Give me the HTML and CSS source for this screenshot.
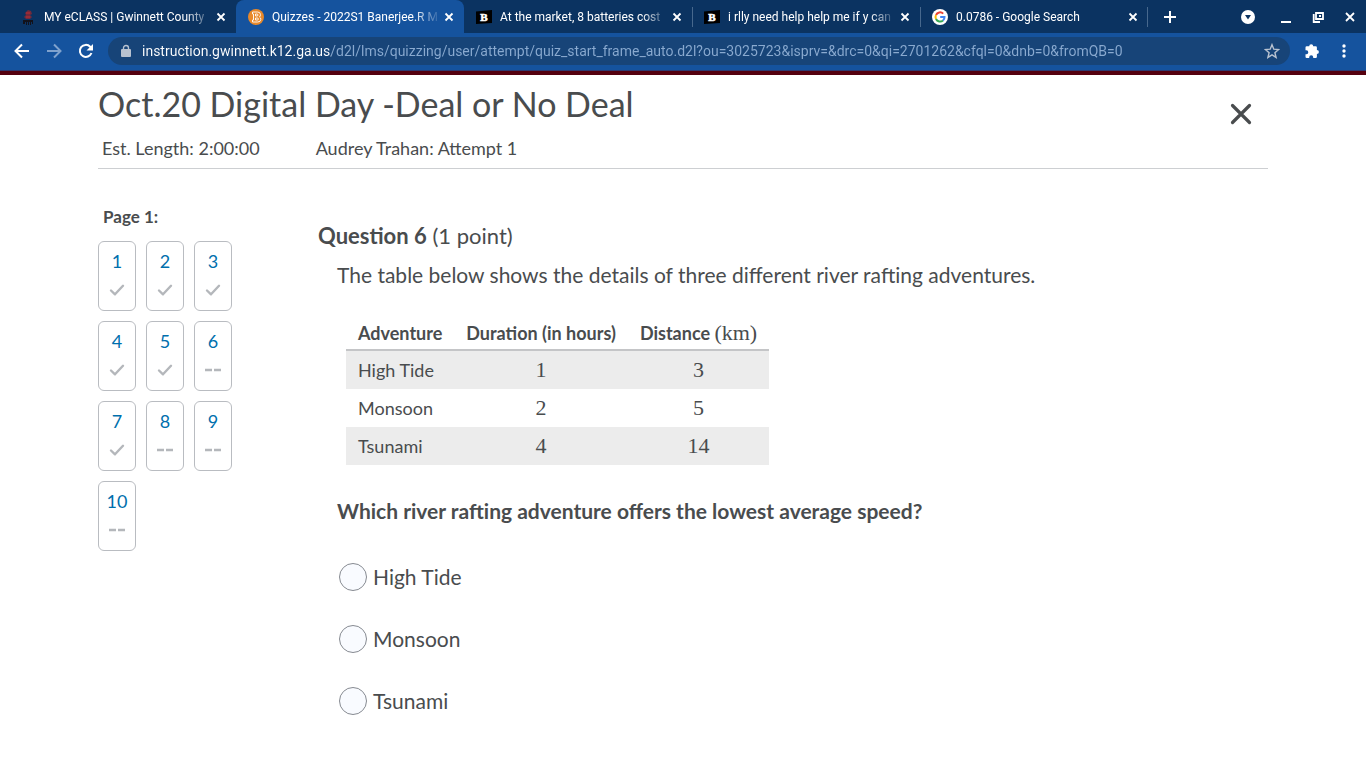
FILE: index.html
```html
<!DOCTYPE html>
<html lang="en">
<head>
  <meta charset="UTF-8" />
  <meta name="viewport" content="width=device-width, initial-scale=1.0"/>
  <title>Quizzes - 2022S1 Banerjee.R</title>
  <link rel="stylesheet" href="styles.css">
</head>
<body>
  <svg class="defs" aria-hidden="true">
    <symbol id="x" viewBox="0 0 10 10"><path d="M1.5 1.5l7 7M8.5 1.5l-7 7" fill="none" stroke="currentColor" stroke-width="1.8"/></symbol>
    <symbol id="check" viewBox="0 0 16 12"><path d="M2 6.500l4 3.800 8-8.500" fill="none" stroke="currentColor" stroke-width="2.4" stroke-linecap="round" stroke-linejoin="round"/></symbol>
    <symbol id="dashes" viewBox="0 0 16 12"><path d="M0 6h7M9 6h7" fill="none" stroke="currentColor" stroke-width="2.6"/></symbol>
    <symbol id="brainly" viewBox="0 0 16 16"><path d="M0 2.5L16 1v13L0 15z" fill="#000"/><text x="8" y="11.8" text-anchor="middle" font-family="Liberation Serif, serif" font-weight="bold" font-size="11" fill="#fff" stroke="#fff" stroke-width=".6">B</text></symbol>
  </svg>

  <header class="browser">
    <div class="tabstrip">
      <div class="tab">
        <svg class="favicon" viewBox="0 0 16 16"><path d="M5 4l3-3 3 1 1 3-2 1 2 2-2 2H6L4 8l2-2z" fill="#722a3b"/><path d="M6 4h4M6 8h4" stroke="#c02c35"/><path d="M3 15v-4h10v4h-1v-2h-1v3h-1v-3H9v3H8v-3H7v3H6v-3H5v2z" fill="#12121b"/></svg>
        <span class="tab-title">MY eCLASS | Gwinnett County</span>
        <button class="icon-btn" aria-label="Close tab"><svg class="close"><use href="#x"/></svg></button>
      </div>
      <div class="tab active">
        <svg class="favicon" viewBox="0 0 16 16"><circle cx="8" cy="8" r="8" fill="#e8892b"/><path d="M4.5 3h5q3 0 3 2.700-.1 1.500-1 2.300 1.500.8 1.300 2.500-.2 2.500-3.200 2.500H4.500v-2h1V5h-1zM7.500 5v2H9q1 0 1-1T9 5zm0 4v2H9.400q1 0 1-1t-1-1z" fill="none" stroke="#fff" stroke-width=".9"/></svg>
        <span class="tab-title">Quizzes - 2022S1 Banerjee.R M</span>
        <button class="icon-btn" aria-label="Close tab"><svg class="close"><use href="#x"/></svg></button>
      </div>
      <div class="tab">
        <svg class="favicon"><use href="#brainly"/></svg>
        <span class="tab-title">At the market, 8 batteries cost</span>
        <button class="icon-btn" aria-label="Close tab"><svg class="close"><use href="#x"/></svg></button>
      </div>
      <div class="tab divided">
        <svg class="favicon"><use href="#brainly"/></svg>
        <span class="tab-title">i rlly need help help me if y can</span>
        <button class="icon-btn" aria-label="Close tab"><svg class="close"><use href="#x"/></svg></button>
      </div>
      <div class="tab divided last">
        <svg class="favicon" viewBox="0 0 16 16"><circle cx="8" cy="8" r="8" fill="#fff"/><g fill="none" stroke-width="2"><path d="M11.200 4.600A4.500 4.500 0 0 0 4 6" stroke="#ea4335"/><path d="M4 6a4.500 4.500 0 0 0 0 4" stroke="#fbbc05"/><path d="M4 10a4.500 4.500 0 0 0 7 1.500" stroke="#34a853"/><path d="M11 11.500A4.500 4.500 0 0 0 12.500 8H8.200" stroke="#4285f4"/></g></svg>
        <span class="tab-title">0.0786 - Google Search</span>
        <button class="icon-btn" aria-label="Close tab"><svg class="close"><use href="#x"/></svg></button>
      </div>
      <button class="icon-btn new-tab" aria-label="New tab"><svg viewBox="0 0 12 12"><path d="M6 0v12M0 6h12" stroke="currentColor" stroke-width="2"/></svg></button>
      <div class="window-controls">
        <button class="icon-btn search-tabs" aria-label="Search tabs"><svg viewBox="0 0 14 14"><circle cx="7" cy="7" r="7" fill="currentColor"/><path d="M4 5h6L7 9.500z" fill="#0b3361"/></svg></button>
        <button class="icon-btn" aria-label="Minimize"><svg viewBox="0 0 14 14"><path d="M2 12h10" stroke="currentColor" stroke-width="2"/></svg></button>
        <button class="icon-btn" aria-label="Restore"><svg viewBox="0 0 14 14"><path d="M5 3h7v6H5zM2.700 4v8H9" fill="none" stroke="currentColor" stroke-width="1.800"/><path d="M8 5h2v2H8z" fill="currentColor"/></svg></button>
        <button class="icon-btn" aria-label="Close window"><svg viewBox="0 0 14 14"><path d="M3 3l8 8M11 3l-8 8" stroke="currentColor" stroke-width="1.800"/></svg></button>
      </div>
    </div>

    <div class="toolbar">
      <button class="icon-btn" aria-label="Back"><svg viewBox="0 0 16 16"><path d="M15 8H2M8 1.500L1.500 8 8 14.500" fill="none" stroke="currentColor" stroke-width="2"/></svg></button>
      <button class="icon-btn" aria-label="Forward" disabled><svg viewBox="0 0 16 16"><path d="M1 8h13M8 1.500L14.500 8 8 14.500" fill="none" stroke="currentColor" stroke-width="2"/></svg></button>
      <button class="icon-btn" aria-label="Reload"><svg viewBox="0 0 16 16"><path d="M13.500 10A6 6 0 1 1 12.200 3.700L13 4.500" fill="none" stroke="currentColor" stroke-width="2"/><path d="M15 1v6.500H8.500z" fill="currentColor"/></svg></button>
      <div class="address">
        <svg class="lock" viewBox="0 0 10 14"><path d="M1 5h8q1 0 1 1v6q0 1-1 1H1q-1 0-1-1V6q0-1 1-1z" fill="currentColor"/><path d="M2.500 6V4a2.500 2.500 0 0 1 5 0v2" fill="none" stroke="currentColor" stroke-width="1.400"/></svg>
        <input class="url" type="text" aria-label="Address" value="instruction.gwinnett.k12.ga.us/d2l/lms/quizzing/user/attempt/quiz_start_frame_auto.d2l?ou=3025723&amp;isprv=&amp;drc=0&amp;qi=2701262&amp;cfql=0&amp;dnb=0&amp;fromQB=0">
        <button class="icon-btn star" aria-label="Bookmark"><svg viewBox="0 0 16 16"><path d="M8 1.700l1.800 4.500 4.800.4-3.700 3.100 1.200 4.700L8 11.900l-4.100 2.500 1.200-4.700-3.700-3.100 4.800-.4z" fill="none" stroke="currentColor" stroke-width="1.400"/></svg></button>
      </div>
      <button class="icon-btn" aria-label="Extensions"><svg viewBox="0 0 16 16"><path d="M1.500 4.500q0-1.200 1.200-1.200h2.500a2 2 0 1 1 4 0h2.500q1.200 0 1.200 1.200v2.500a2 2 0 1 1 0 4v2.800q0 1.200-1.200 1.200H9.200v-.8a2 2 0 0 0-4 0v.8H2.700q-1.200 0-1.200-1.200v-2.500h.8a2 2 0 0 0 0-4h-.8z" fill="currentColor"/></svg></button>
      <button class="icon-btn menu" aria-label="Menu"><svg viewBox="0 0 16 16"><g fill="currentColor"><circle cx="8" cy="3" r="1.700"/><circle cx="8" cy="8" r="1.700"/><circle cx="8" cy="13" r="1.700"/></g></svg></button>
    </div>
  </header>

  <main class="page">
    <div class="quiz-header">
      <div>
        <h1>Oct.20 Digital Day -Deal or No Deal</h1>
        <div class="meta">
          <span>Est. Length: 2:00:00</span>
          <span>Audrey Trahan: Attempt 1</span>
        </div>
      </div>
      <button class="exit" aria-label="Exit quiz"><svg viewBox="0 0 22 22"><path d="M2.500 2.500l17 17M19.500 2.500l-17 17" stroke="currentColor" stroke-width="3.2" stroke-linecap="round"/></svg></button>
    </div>

    <div class="quiz-body">
      <nav class="pages">
        <h2>Page 1:</h2>
        <div class="question-grid">
          <a href="#q1">1<svg><use href="#check"/></svg></a>
          <a href="#q2">2<svg><use href="#check"/></svg></a>
          <a href="#q3">3<svg><use href="#check"/></svg></a>
          <a href="#q4">4<svg><use href="#check"/></svg></a>
          <a href="#q5">5<svg><use href="#check"/></svg></a>
          <a href="#q6">6<svg><use href="#dashes"/></svg></a>
          <a href="#q7">7<svg><use href="#check"/></svg></a>
          <a href="#q8">8<svg><use href="#dashes"/></svg></a>
          <a href="#q9">9<svg><use href="#dashes"/></svg></a>
          <a href="#q10">10<svg><use href="#dashes"/></svg></a>
        </div>
      </nav>

      <section class="question" id="q6">
        <h2><strong>Question 6</strong> (1 point)</h2>
        <div class="question-content">
          <p>The table below shows the details of three different river rafting adventures.</p>
          <table>
            <thead>
              <tr><th>Adventure</th><th>Duration (in hours)</th><th>Distance <span class="math">(km)</span></th></tr>
            </thead>
            <tbody>
              <tr><td>High Tide</td><td class="math">1</td><td class="math">3</td></tr>
              <tr><td>Monsoon</td><td class="math">2</td><td class="math">5</td></tr>
              <tr><td>Tsunami</td><td class="math">4</td><td class="math">14</td></tr>
            </tbody>
          </table>
          <p class="prompt" id="prompt">Which river rafting adventure offers the lowest average speed?</p>
          <div class="answers" role="radiogroup" aria-labelledby="prompt">
            <label><input type="radio" name="answer"> High Tide</label>
            <label><input type="radio" name="answer"> Monsoon</label>
            <label><input type="radio" name="answer"> Tsunami</label>
          </div>
        </div>
      </section>
    </div>
  </main>
</body>
</html>
```
FILE: styles.css
```css
* {
  box-sizing: border-box;
}

body {
  margin: 0;
  background-color: #fff;
  color: #494c4e;
  font-family: Lato, sans-serif;
}

h1, h2, p {
  margin: 0;
  font-weight: normal;
}

.defs {
  display: none;
}

/* browser bar */
.browser {
  background-color: #15539e;
  border-bottom: 4px solid #55000f;
  color: #fff;
  font-family: Roboto, sans-serif;
}

.tabstrip {
  display: flex;
  align-items: center;
  height: 33px;
  padding-left: 8px;
  background-color: #0b3361;
}

.tab {
  display: flex;
  align-items: center;
  flex: 0 1 228px;
  min-width: 0;
  height: 33px;
  padding: 0 7px 0 12px;
}

.tab.active {
  background-color: #15539e;
  border-radius: 8px 8px 0 0;
}

.tab.divided {
  background: linear-gradient(#47688d, #47688d) left center / 1px 20px no-repeat;
}

.tab.last {
  background: linear-gradient(#47688d, #47688d) left center / 1px 20px no-repeat,
    linear-gradient(#47688d, #47688d) right center / 1px 20px no-repeat;
}

.favicon {
  flex: none;
  width: 16px;
  height: 16px;
  margin-right: 8px;
}

.tab-title {
  flex: 1;
  overflow: hidden;
  white-space: nowrap;
  font-size: 12px;
  line-height: 16px;
  -webkit-mask-image: linear-gradient(to right, #000 84%, transparent);
  mask-image: linear-gradient(to right, #000 84%, transparent);
}

.icon-btn {
  display: flex;
  align-items: center;
  justify-content: center;
  flex: none;
  padding: 0;
  border: 0;
  background: none;
  color: #fff;
}

.icon-btn svg {
  width: 16px;
  height: 16px;
}

.tab .icon-btn {
  width: 16px;
}

.icon-btn .close {
  width: 10px;
  height: 10px;
}

.new-tab {
  width: 44px;
}

.new-tab svg {
  width: 12px;
  height: 12px;
}

.window-controls {
  display: flex;
  margin-left: auto;
}

.window-controls .icon-btn {
  width: 32px;
}

.window-controls .search-tabs {
  margin-right: 6px;
}

.window-controls svg {
  width: 14px;
  height: 14px;
}

.toolbar {
  display: flex;
  align-items: center;
  height: 38px;
  padding: 0 6px 1px;
  border-bottom: 1px solid #2d3a70;
}

.toolbar > .icon-btn {
  width: 32px;
}

.toolbar > .icon-btn:disabled {
  color: #7fa2cd;
}

.address {
  display: flex;
  align-items: center;
  flex: 1;
  height: 28px;
  margin: 0 6px;
  padding: 0 10px 0 13px;
  border-radius: 14px;
  background-color: #174478;
}

.lock {
  width: 10px;
  height: 14px;
  color: #b8c2d0;
}

/* the host name is brighter than the path */
.url {
  flex: 1;
  min-width: 0;
  margin-left: 11px;
  padding: 0;
  border: 0;
  outline: 0;
  font-family: Roboto, sans-serif;
  font-size: 14px;
  line-height: 20px;
  color: transparent;
  background: linear-gradient(to right, #fff 189px, #8aaad0 189px);
  -webkit-background-clip: text;
  background-clip: text;
}

.star {
  color: #b8c2d0;
}

/* quiz */
.page {
  margin: 0 98px;
}

.quiz-header {
  display: flex;
  justify-content: space-between;
  align-items: flex-start;
  padding: 8px 16px 8px 0;
  border-bottom: 1px solid #cdcfd2;
}

h1 {
  font-size: 34px;
  line-height: 42px;
}

.meta {
  display: flex;
  gap: 56px;
  padding: 11px 4px 0;
  font-size: 18px;
  line-height: 24px;
}

.exit {
  display: flex;
  width: 22px;
  height: 22px;
  margin-top: 20px;
  padding: 0;
  border: 0;
  background: none;
  color: #494c4e;
}

.quiz-body {
  display: flex;
  gap: 86px;
  padding-top: 36px;
}

.pages h2 {
  padding-left: 5px;
  font-size: 17px;
  font-weight: bold;
  line-height: 24px;
}

.question-grid {
  display: grid;
  grid-template-columns: repeat(3, 38px);
  gap: 10px;
  padding-top: 12px;
}

.question-grid a {
  display: flex;
  flex-direction: column;
  align-items: center;
  gap: 11px;
  height: 70px;
  padding-top: 7px;
  border: 1px solid #b9bcc1;
  border-radius: 6px;
  color: #006fad;
  font-size: 18px;
  line-height: 24px;
  text-decoration: none;
}

.question-grid svg {
  width: 16px;
  height: 12px;
  color: #b4b7bb;
}

.question {
  flex: 1;
  padding-top: 15px;
  font-size: 21px;
  line-height: 32px;
}

.question h2 {
  font-size: 22px;
}

.question-content {
  padding: 7px 0 0 19px;
}

table {
  margin: 26px 0 0 9px;
  border-collapse: collapse;
  font-size: 18px;
  line-height: 26px;
}

th {
  padding: 3px 12px;
  border-bottom: 2px solid #c4c5c7;
}

td {
  padding: 6px 12px;
  text-align: center;
}

th:first-child,
td:first-child {
  text-align: left;
}

tbody tr:nth-child(odd) {
  background-color: #ececec;
}

.math {
  font-family: "Liberation Serif", serif;
  font-size: 22px;
  font-weight: normal;
}

.prompt {
  margin-top: 30px;
  font-weight: bold;
}

.answers {
  display: flex;
  flex-direction: column;
  align-items: flex-start;
  gap: 30px;
  padding: 34px 0 0 2px;
}

.answers label {
  display: flex;
  align-items: center;
  gap: 6px;
}

.answers input {
  appearance: none;
  width: 28px;
  height: 28px;
  margin: 0;
  border: 1px solid #868a91;
  border-radius: 50%;
  background-color: #f9fbff;
}
```
